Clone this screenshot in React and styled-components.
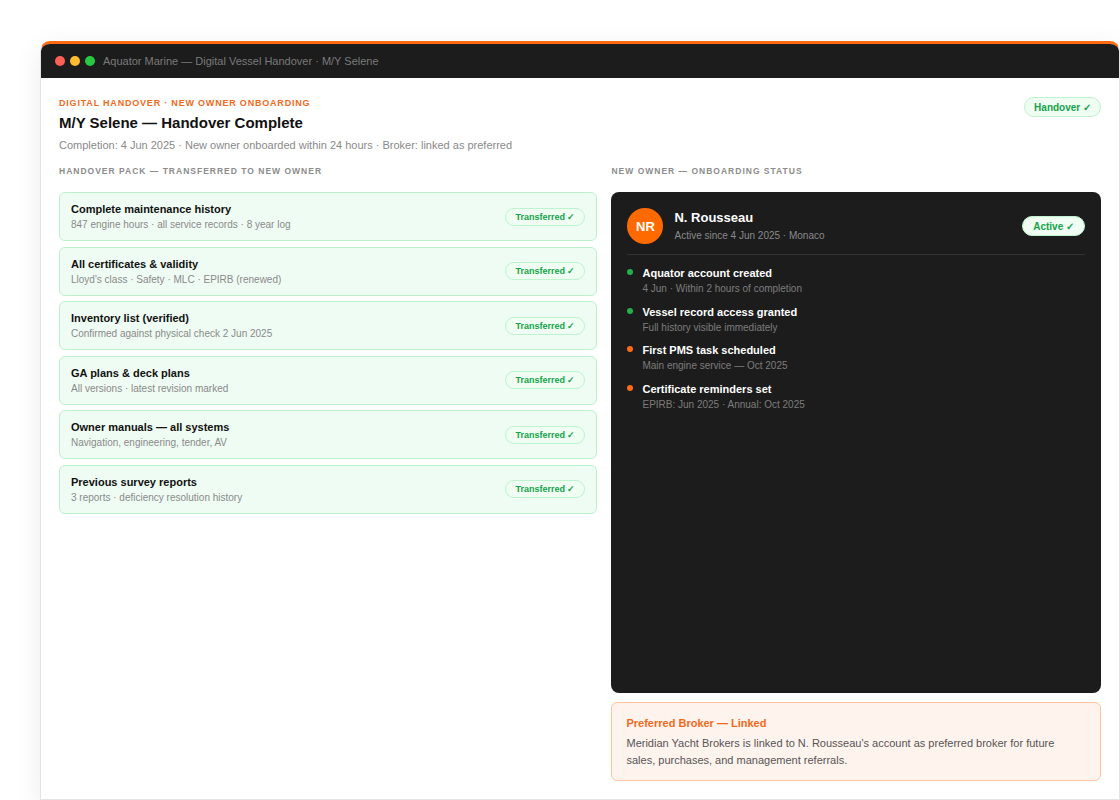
import styled, { createGlobalStyle } from "styled-components"

const GlobalStyle = createGlobalStyle`
    * { box-sizing: border-box; }
    body {
        margin: 0;
        background: #ffffff;
        font-family: "Liberation Sans", Arial, sans-serif;
    }
`

const Page = styled.div`
    padding: 41px 0 0 40px;
    height: 800px;
    overflow: hidden;
`

const Window = styled.div`
    width: 1080px;
    height: 759px;
    display: flex;
    flex-direction: column;
    background: #ffffff;
    border: 1px solid #e4e4e4;
    border-top: 3px solid #ff6a13;
    border-radius: 10px 10px 0 0;
    overflow: hidden;
    box-shadow: 0 8px 30px rgba(0, 0, 0, 0.08);
`

const TitleBar = styled.div`
    height: 34px;
    flex-shrink: 0;
    display: flex;
    align-items: center;
    gap: 5px;
    padding-left: 14px;
    background: #1c1c1c;
`

const Dot = styled.span`
    width: 10px;
    height: 10px;
    border-radius: 50%;
    background: ${(p) => p.color};
`

const WindowTitle = styled.span`
    margin-left: 3px;
    font-size: 11px;
    color: #7a7a7a;
`

const Content = styled.div`
    flex: 1;
    display: flex;
    flex-direction: column;
    padding: 18px 18px 18px 18px;
    min-height: 0;
`

const Header = styled.div`
    display: flex;
    justify-content: space-between;
    align-items: flex-start;
`

const Eyebrow = styled.div`
    font-size: 9px;
    font-weight: 700;
    letter-spacing: 0.8px;
    text-transform: uppercase;
    color: #f26a1b;
    line-height: 12px;
    margin-top: 1px;
`

const Title = styled.h1`
    margin: 4px 0 0;
    font-size: 15px;
    font-weight: 700;
    color: #111111;
    line-height: 20px;
`

const Subtitle = styled.div`
    margin-top: 5px;
    font-size: 11px;
    color: #8a8a8a;
    line-height: 14px;
`

const Pill = styled.span`
    display: inline-flex;
    align-items: center;
    height: ${(p) => p.$h || 20}px;
    padding: 0 ${(p) => p.$px || 10}px;
    border-radius: 999px;
    background: #effdf3;
    border: 1px solid #bdf3cf;
    color: #16a34a;
    font-size: ${(p) => p.$fs || 10}px;
    font-weight: 700;
    white-space: nowrap;
`

const HeaderPill = styled(Pill)`
    margin-top: 1px;
`

const Columns = styled.div`
    flex: 1;
    min-height: 0;
    margin-top: 13px;
    display: grid;
    grid-template-columns: 1.1fr 1fr;
    column-gap: 14px;
`

const Column = styled.div`
    display: flex;
    flex-direction: column;
    min-height: 0;
`

const SectionLabel = styled.div`
    font-size: 8.5px;
    font-weight: 700;
    letter-spacing: 1px;
    text-transform: uppercase;
    color: #8c8c8c;
    line-height: 12px;
    margin-bottom: 15px;
`

const PackList = styled.div`
    display: flex;
    flex-direction: column;
    gap: 5.5px;
`

const PackItem = styled.div`
    height: 49px;
    display: flex;
    align-items: center;
    justify-content: space-between;
    padding: 0 11px 0 11px;
    background: #effcf3;
    border: 1px solid #bcf0cd;
    border-radius: 6px;
`

const ItemTitle = styled.div`
    font-size: 11px;
    font-weight: 700;
    color: #111111;
    line-height: 14px;
`

const ItemSub = styled.div`
    margin-top: 2px;
    font-size: 10px;
    color: #8a8a8a;
    line-height: 13px;
`

const OwnerCard = styled.div`
    flex: 1;
    background: #1c1c1c;
    border-radius: 8px;
    padding: 16px 16px;
`

const OwnerHead = styled.div`
    display: flex;
    align-items: center;
    gap: 11px;
    padding-bottom: 10px;
    border-bottom: 1px solid #333333;
`

const Avatar = styled.div`
    width: 36px;
    height: 36px;
    border-radius: 50%;
    background: #ff6a00;
    color: #ffffff;
    font-size: 13px;
    font-weight: 700;
    display: flex;
    align-items: center;
    justify-content: center;
    flex-shrink: 0;
`

const OwnerInfo = styled.div`
    flex: 1;
    margin-top: -1px;
`

const OwnerName = styled.div`
    font-size: 13px;
    font-weight: 700;
    color: #ffffff;
    line-height: 16px;
`

const OwnerSub = styled.div`
    margin-top: 3px;
    font-size: 10px;
    color: #8a8a8a;
    line-height: 13px;
`

const Steps = styled.div`
    display: flex;
    flex-direction: column;
    gap: 9.5px;
    padding-top: 11px;
`

const Step = styled.div`
    display: flex;
    gap: 9px;
`

const StepDot = styled.span`
    width: 6px;
    height: 6px;
    margin-top: 3px;
    border-radius: 50%;
    background: ${(p) => (p.$done ? "#22b14c" : "#ff6a13")};
    flex-shrink: 0;
`

const StepTitle = styled.div`
    font-size: 11px;
    font-weight: 700;
    color: #ffffff;
    line-height: 14px;
`

const StepSub = styled.div`
    margin-top: 2px;
    font-size: 10px;
    color: #7c7c7c;
    line-height: 13px;
`

const BrokerBox = styled.div`
    margin-top: 9px;
    background: #fff3ee;
    border: 1px solid #fdc49c;
    border-radius: 6px;
    padding: 13px 14px 11px;
`

const BrokerTitle = styled.div`
    font-size: 11px;
    font-weight: 700;
    color: #f26a1b;
    line-height: 14px;
`

const BrokerText = styled.div`
    margin-top: 5px;
    font-size: 11px;
    color: #555555;
    line-height: 17px;
`

const pack = [
    ["Complete maintenance history", "847 engine hours · all service records · 8 year log"],
    ["All certificates & validity", "Lloyd's class · Safety · MLC · EPIRB (renewed)"],
    ["Inventory list (verified)", "Confirmed against physical check 2 Jun 2025"],
    ["GA plans & deck plans", "All versions · latest revision marked"],
    ["Owner manuals — all systems", "Navigation, engineering, tender, AV"],
    ["Previous survey reports", "3 reports · deficiency resolution history"],
]

const steps = [
    ["Aquator account created", "4 Jun · Within 2 hours of completion", true],
    ["Vessel record access granted", "Full history visible immediately", true],
    ["First PMS task scheduled", "Main engine service — Oct 2025", false],
    ["Certificate reminders set", "EPIRB: Jun 2025 · Annual: Oct 2025", false],
]

const App = () => {
    return (
        <Page>
            <GlobalStyle />
            <Window>
                <TitleBar>
                    <Dot color="#ff5f57" />
                    <Dot color="#febc2e" />
                    <Dot color="#28c840" />
                    <WindowTitle>Aquator Marine — Digital Vessel Handover · M/Y Selene</WindowTitle>
                </TitleBar>
                <Content>
                    <Header>
                        <div>
                            <Eyebrow>Digital Handover · New Owner Onboarding</Eyebrow>
                            <Title>M/Y Selene — Handover Complete</Title>
                            <Subtitle>Completion: 4 Jun 2025 · New owner onboarded within 24 hours · Broker: linked as preferred</Subtitle>
                        </div>
                        <HeaderPill $px={9}>Handover ✓</HeaderPill>
                    </Header>

                    <Columns>
                        <Column>
                            <SectionLabel>Handover Pack — Transferred to New Owner</SectionLabel>
                            <PackList>
                                {pack.map(([t, s]) => (
                                    <PackItem key={t}>
                                        <div>
                                            <ItemTitle>{t}</ItemTitle>
                                            <ItemSub>{s}</ItemSub>
                                        </div>
                                        <Pill $h={18} $fs={9} $px={9}>Transferred ✓</Pill>
                                    </PackItem>
                                ))}
                            </PackList>
                        </Column>

                        <Column>
                            <SectionLabel>New Owner — Onboarding Status</SectionLabel>
                            <OwnerCard>
                                <OwnerHead>
                                    <Avatar>NR</Avatar>
                                    <OwnerInfo>
                                        <OwnerName>N. Rousseau</OwnerName>
                                        <OwnerSub>Active since 4 Jun 2025 · Monaco</OwnerSub>
                                    </OwnerInfo>
                                    <Pill $h={20} $fs={10} $px={10}>Active ✓</Pill>
                                </OwnerHead>
                                <Steps>
                                    {steps.map(([t, s, done]) => (
                                        <Step key={t}>
                                            <StepDot $done={done} />
                                            <div>
                                                <StepTitle>{t}</StepTitle>
                                                <StepSub>{s}</StepSub>
                                            </div>
                                        </Step>
                                    ))}
                                </Steps>
                            </OwnerCard>
                            <BrokerBox>
                                <BrokerTitle>Preferred Broker — Linked</BrokerTitle>
                                <BrokerText>
                                    Meridian Yacht Brokers is linked to N. Rousseau's account as preferred broker for future sales, purchases, and management referrals.
                                </BrokerText>
                            </BrokerBox>
                        </Column>
                    </Columns>
                </Content>
            </Window>
        </Page>
    )
}

export default App
